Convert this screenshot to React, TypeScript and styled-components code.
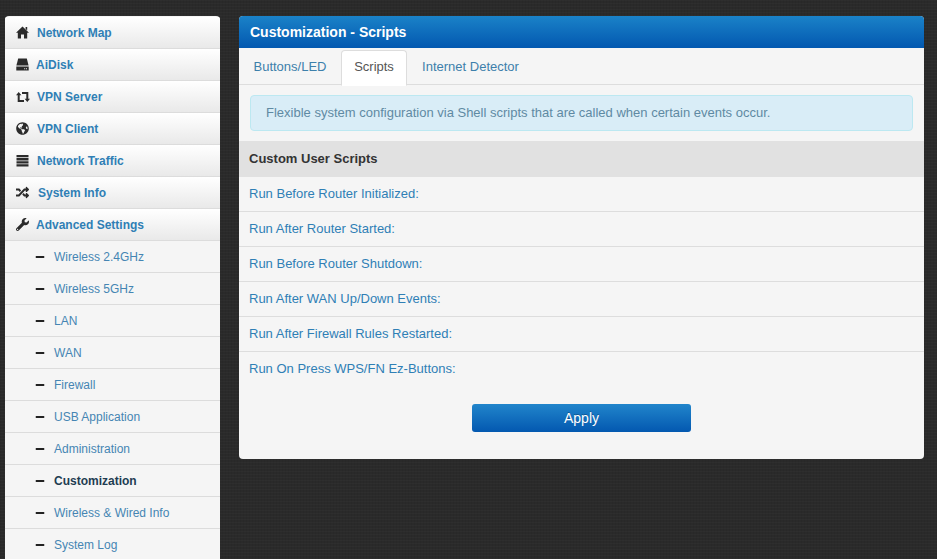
import React from "react";
import styled, { createGlobalStyle } from "styled-components";
import { FaGlobeAmericas, FaRandom, FaWrench, FaMinus } from "react-icons/fa";

const Global = createGlobalStyle`
  html, body { margin: 0; padding: 0; height: 100%; overflow: hidden; }
  body {
    background-color: #2a2a2a;
    background-image:
      repeating-linear-gradient(0deg, rgba(255,255,255,.02) 0 1px, transparent 1px 3px),
      repeating-linear-gradient(90deg, rgba(0,0,0,.05) 0 1px, transparent 1px 3px);
    font-family: "Liberation Sans", Arial, sans-serif;
  }
`;

const Page = styled.div`
  display: flex;
  align-items: flex-start;
  gap: 19px;
  height: 559px;
  padding: 16px 13px 0 5px;
  box-sizing: border-box;
  overflow: hidden;
`;

const Sidebar = styled.nav`
  flex: 0 0 215px;
  display: flex;
  flex-direction: column;
  padding-top: 1px;
  background: #f5f5f5;
  border-radius: 4px 4px 0 0;
  overflow: hidden;
`;

const NavRow = styled.a`
  display: flex;
  align-items: center;
  height: 32px;
  box-sizing: border-box;
  padding-left: 11px;
  border-bottom: 1px solid #dcdcdc;
  background: linear-gradient(#ffffff, #e9e9e9);
  color: #2f7fb5;
  font-size: 12px;
  font-weight: bold;
`;

const IconSlot = styled.span<{ $w: number }>`
  flex: 0 0 ${(p) => p.$w}px;
  display: flex;
  align-items: center;
  color: #2b2b2b;
`;

const SubRow = styled.a<{ $active?: boolean }>`
  display: flex;
  align-items: center;
  height: 32px;
  box-sizing: border-box;
  padding-left: 30px;
  border-bottom: 1px solid #dcdcdc;
  color: ${(p) => (p.$active ? "#1f3d52" : "#4585b3")};
  font-size: 12px;
  font-weight: ${(p) => (p.$active ? "bold" : "normal")};
`;

const Dash = styled.span`
  flex: 0 0 19px;
  display: flex;
  align-items: center;
  color: #222;
`;

const Panel = styled.main`
  flex: 0 0 685px;
  height: 443px;
  background: #f5f5f5;
  border-radius: 4px;
  overflow: hidden;
`;

const PanelHead = styled.h1`
  margin: 0;
  height: 32px;
  line-height: 32px;
  padding-left: 11px;
  background: linear-gradient(#1a82c8, #0358b0);
  color: #fff;
  font-size: 14px;
  font-weight: bold;
`;

const Tabs = styled.div`
  display: flex;
  height: 37px;
  box-sizing: border-box;
  padding-top: 2px;
  border-bottom: 1px solid #dddddd;
`;

const Tab = styled.a<{ $active?: boolean; $w: number }>`
  flex: 0 0 ${(p) => p.$w}px;
  box-sizing: border-box;
  height: 36px;
  line-height: 31px;
  text-align: center;
  font-size: 13px;
  color: ${(p) => (p.$active ? "#555" : "#3d80ab")};
  background: ${(p) => (p.$active ? "#fff" : "transparent")};
  border: 1px solid ${(p) => (p.$active ? "#dddddd" : "transparent")};
  border-bottom-color: ${(p) => (p.$active ? "#fff" : "transparent")};
  border-radius: 4px 4px 0 0;
`;

const Notice = styled.div`
  margin: 10px 11px;
  height: 36px;
  box-sizing: border-box;
  padding-left: 15px;
  line-height: 34px;
  background: #d9edf7;
  border: 1px solid #bce8f1;
  border-radius: 4px;
  color: #5f8aa3;
  font-size: 13px;
`;

const SectionHead = styled.div`
  height: 36px;
  line-height: 35px;
  padding-left: 10px;
  background: #e1e1e1;
  color: #333;
  font-size: 13px;
  font-weight: bold;
`;

const ScriptList = styled.div`
  display: flex;
  flex-direction: column;
`;

const ScriptRow = styled.div`
  height: 35px;
  box-sizing: border-box;
  line-height: 33px;
  padding-left: 10px;
  border-bottom: 1px solid #dddddd;
  color: #2f7fb5;
  font-size: 13px;
  &:last-child { border-bottom: none; }
`;

const Actions = styled.div`
  display: flex;
  padding: 17px 0 0 233px;
`;

const ApplyButton = styled.button`
  width: 219px;
  height: 28px;
  padding: 0 0 1px;
  border: none;
  border-radius: 3px;
  background: linear-gradient(#2185cb, #0358b0);
  color: #fff;
  font-family: inherit;
  font-size: 14px;
  text-shadow: 0 -1px 0 rgba(0,0,0,.25);
`;

const Home = () => (
  <svg width="13" height="13" viewBox="0 0 13 13" fill="currentColor">
    <path d="M6.5 0.5 L13 6.8 H11.2 V12.5 H8 V8.5 H5 V12.5 H1.8 V6.8 H0 Z" />
    <path d="M9.6 1h1.6v3.4L9.6 2.9z" />
  </svg>
);

const Disk = () => (
  <svg width="13" height="13" viewBox="0 0 13 13" fill="currentColor">
    <path d="M2.2 0.5h8.6L12.6 7.5H0.4z" />
    <path d="M0.3 8.6h12.4v3.9H0.3z M8.2 10.2v1h1v-1z M10 10.2v1h1v-1z" fillRule="evenodd" />
  </svg>
);

const Retweet = () => (
  <svg width="14" height="12" viewBox="0 0 14 12" fill="currentColor">
    <path d="M2.7 1 L5.4 4.2 H3.7 V9 H8 V11 H1.7 V4.2 H0 Z" />
    <path d="M11.3 11 L8.6 7.8 H10.3 V3 H6 V1 H12.3 V7.8 H14 Z" />
  </svg>
);

const Stack = () => (
  <svg width="13" height="13" viewBox="0 0 13 13" fill="currentColor">
    <path d="M0.5 1h12v2.3h-12z M0.5 4.1h12v2.3h-12z M0.5 7.2h12v2.3h-12z M0.5 10.3h12v2.3h-12z" />
  </svg>
);

const top: [string, React.ReactNode, number][] = [
  ["Network Map", <Home />, 21],
  ["AiDisk", <Disk />, 20],
  ["VPN Server", <Retweet />, 21],
  ["VPN Client", <FaGlobeAmericas size={13} />, 21],
  ["Network Traffic", <Stack />, 21],
  ["System Info", <FaRandom size={13} />, 22],
  ["Advanced Settings", <FaWrench size={13} />, 20],
];

const sub = [
  "Wireless 2.4GHz",
  "Wireless 5GHz",
  "LAN",
  "WAN",
  "Firewall",
  "USB Application",
  "Administration",
  "Customization",
  "Wireless & Wired Info",
  "System Log",
];

const scripts = [
  "Run Before Router Initialized:",
  "Run After Router Started:",
  "Run Before Router Shutdown:",
  "Run After WAN Up/Down Events:",
  "Run After Firewall Rules Restarted:",
  "Run On Press WPS/FN Ez-Buttons:",
];

export default function App() {
  return (
    <Page>
      <Global />
      <Sidebar>
        {top.map(([label, icon, w]) => (
          <NavRow key={label}>
            <IconSlot $w={w}>{icon}</IconSlot>
            {label}
          </NavRow>
        ))}
        {sub.map((label) => (
          <SubRow key={label} $active={label === "Customization"}>
            <Dash>
              <FaMinus size={10} />
            </Dash>
            {label}
          </SubRow>
        ))}
      </Sidebar>
      <Panel>
        <PanelHead>Customization - Scripts</PanelHead>
        <Tabs>
          <Tab $w={102}>Buttons/LED</Tab>
          <Tab $w={66} $active>Scripts</Tab>
          <Tab $w={127}>Internet Detector</Tab>
        </Tabs>
        <Notice>Flexible system configuration via Shell scripts that are called when certain events occur.</Notice>
        <SectionHead>Custom User Scripts</SectionHead>
        <ScriptList>
          {scripts.map((s) => (
            <ScriptRow key={s}>{s}</ScriptRow>
          ))}
        </ScriptList>
        <Actions>
          <ApplyButton>Apply</ApplyButton>
        </Actions>
      </Panel>
    </Page>
  );
}
